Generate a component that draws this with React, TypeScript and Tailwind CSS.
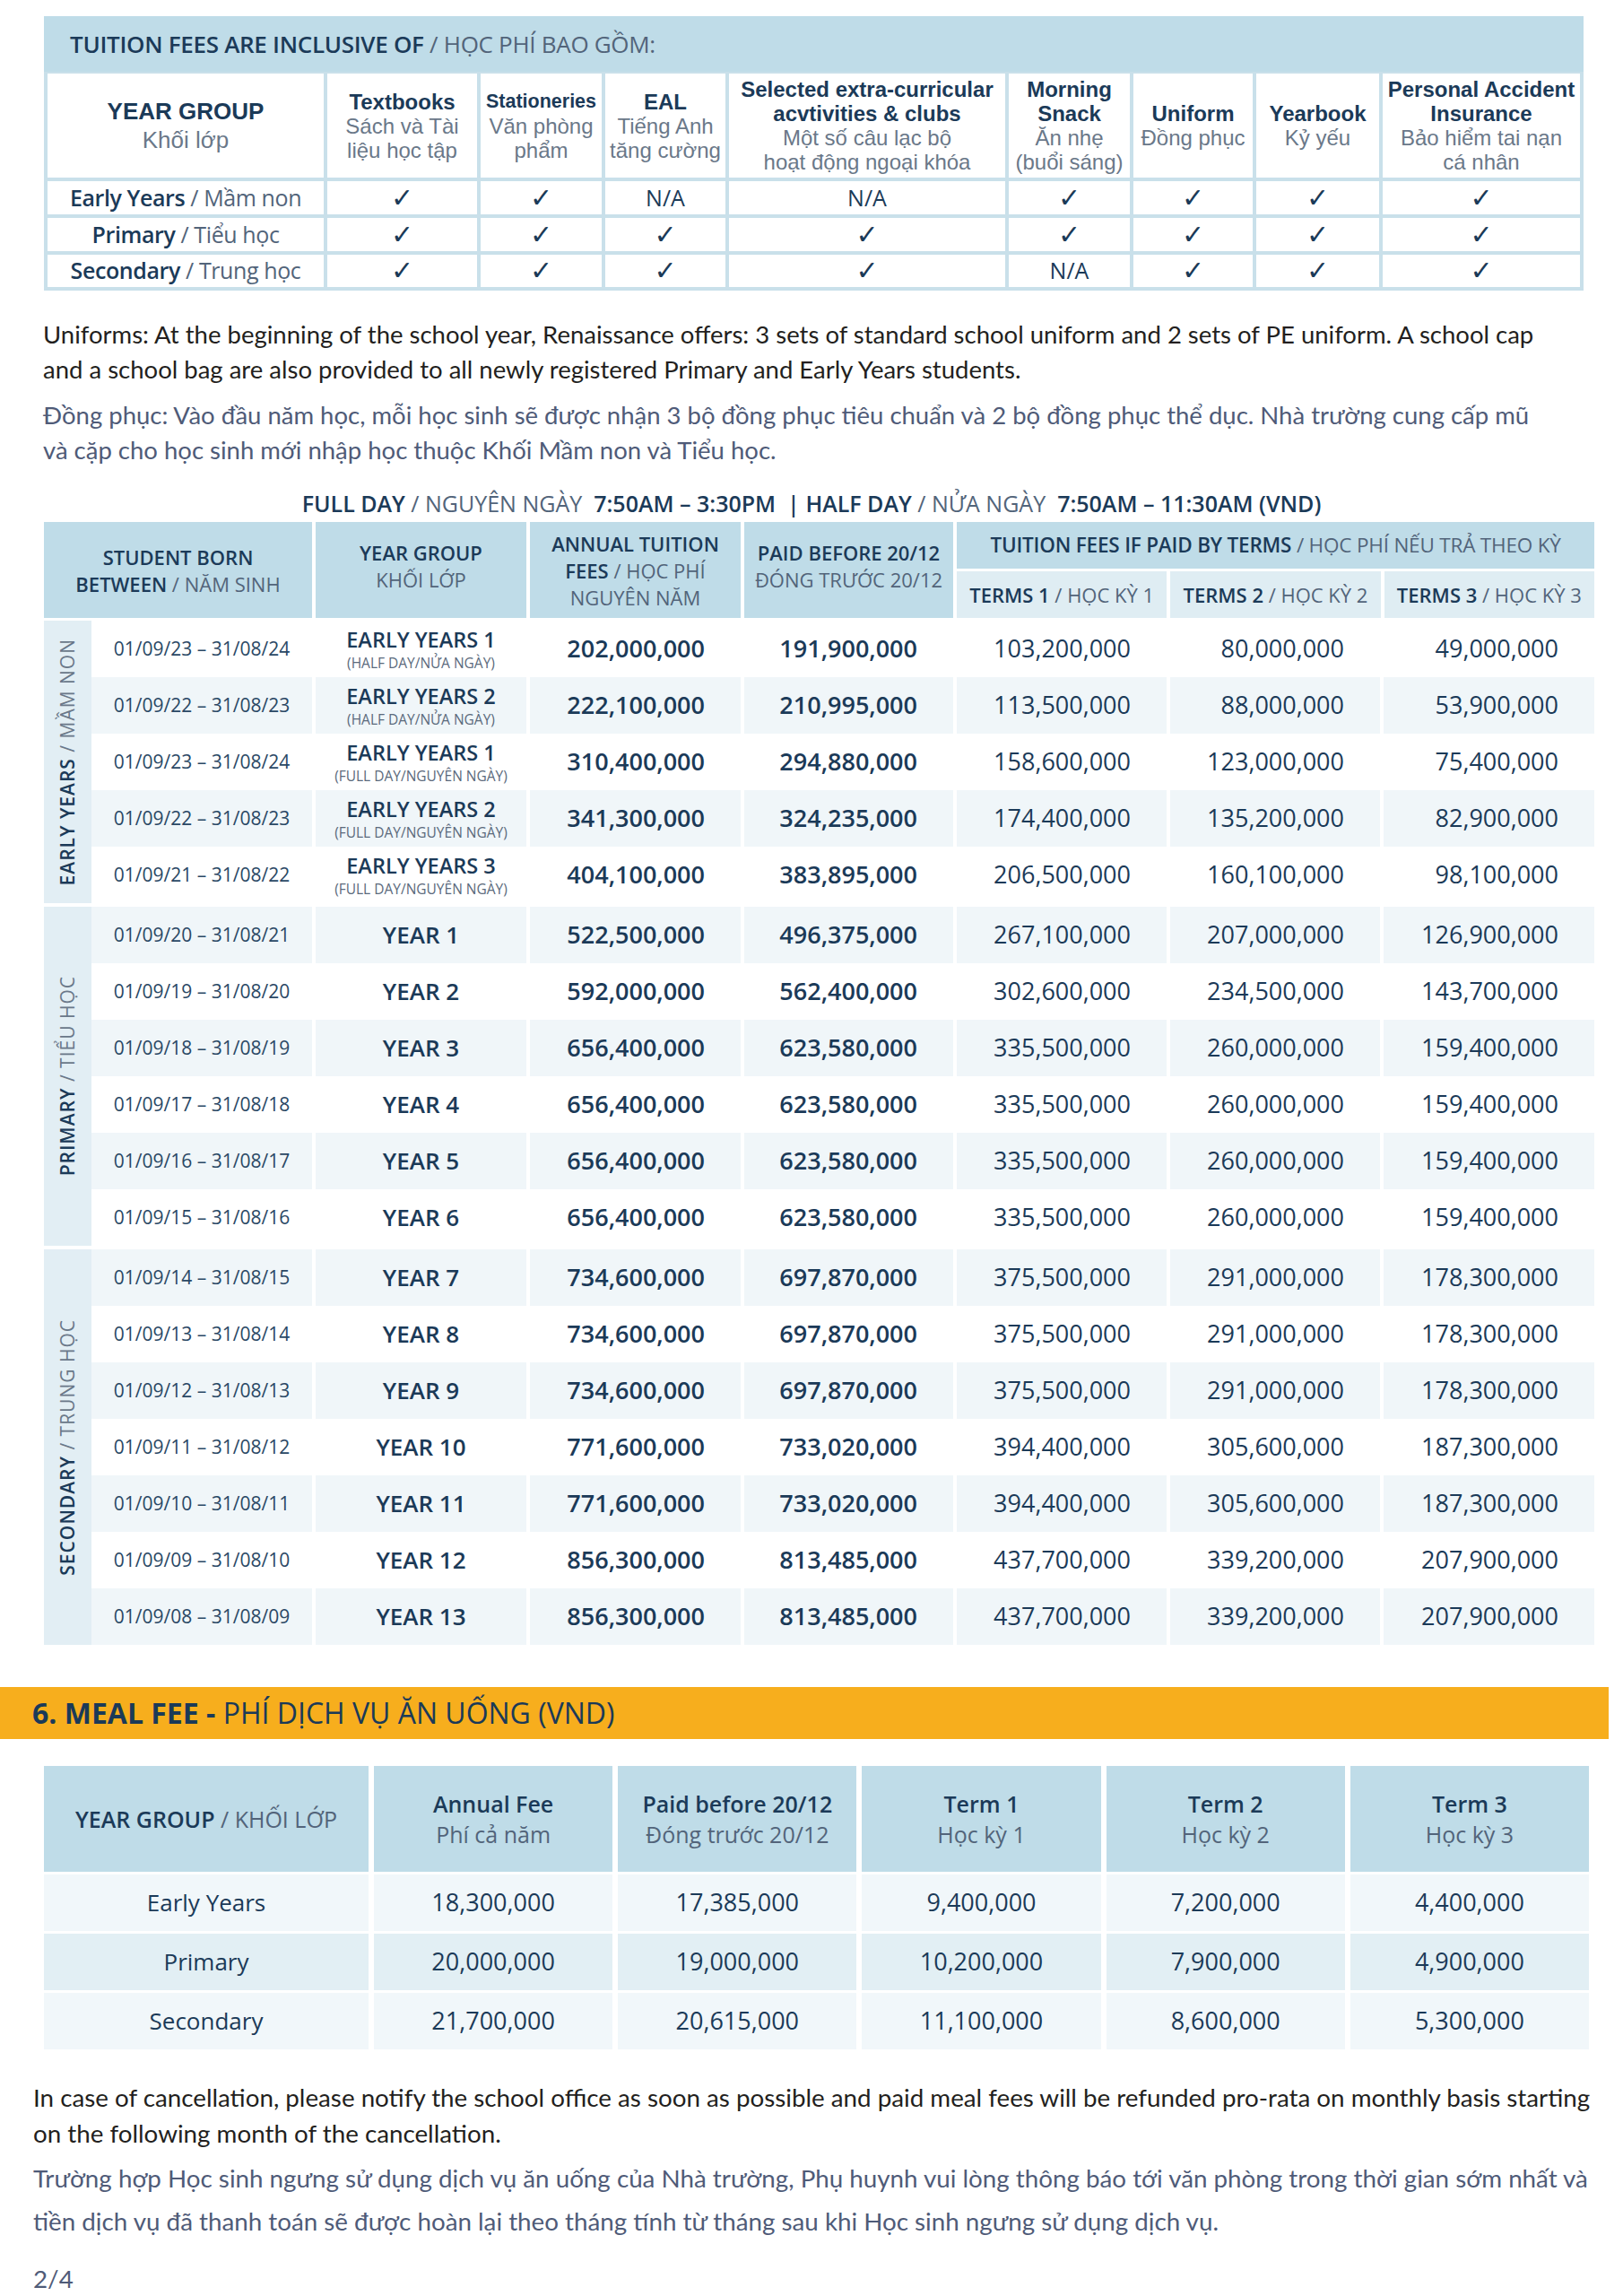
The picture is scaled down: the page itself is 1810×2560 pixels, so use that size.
import React from 'react';

const SANS = "font-['Open_Sans',sans-serif]";
const GROT = "font-['Liberation_Sans',sans-serif]";
const BODY = "font-['Lato',sans-serif]";
const CHECK = '✓';

type Inc = { en: string[]; vn: string[]; small?: boolean };

const incCols: Inc[] = [
  { en: ['Textbooks'], vn: ['Sách và Tài', 'liệu học tập'] },
  { en: ['Stationeries'], vn: ['Văn phòng', 'phẩm'], small: true },
  { en: ['EAL'], vn: ['Tiếng Anh', 'tăng cường'] },
  { en: ['Selected extra-curricular', 'acvtivities & clubs'], vn: ['Một số câu lạc bộ', 'hoạt động ngoại khóa'] },
  { en: ['Morning', 'Snack'], vn: ['Ăn nhẹ', '(buổi sáng)'] },
  { en: ['Uniform'], vn: ['Đồng phục'] },
  { en: ['Yearbook'], vn: ['Kỷ yếu'] },
  { en: ['Personal Accident', 'Insurance'], vn: ['Bảo hiểm tai nạn', 'cá nhân'] },
];

const incRows = [
  { en: 'Early Years', vn: 'Mầm non', v: [CHECK, CHECK, 'N/A', 'N/A', CHECK, CHECK, CHECK, CHECK] },
  { en: 'Primary', vn: 'Tiểu học', v: [CHECK, CHECK, CHECK, CHECK, CHECK, CHECK, CHECK, CHECK] },
  { en: 'Secondary', vn: 'Trung học', v: [CHECK, CHECK, CHECK, CHECK, 'N/A', CHECK, CHECK, CHECK] },
];

type FeeRow = { born: string; year: string; note?: string; fees: string[] };

const early: FeeRow[] = [
  { born: '01/09/23 – 31/08/24', year: 'EARLY YEARS 1', note: '(HALF DAY/NỬA NGÀY)', fees: ['202,000,000', '191,900,000', '103,200,000', '80,000,000', '49,000,000'] },
  { born: '01/09/22 – 31/08/23', year: 'EARLY YEARS 2', note: '(HALF DAY/NỬA NGÀY)', fees: ['222,100,000', '210,995,000', '113,500,000', '88,000,000', '53,900,000'] },
  { born: '01/09/23 – 31/08/24', year: 'EARLY YEARS 1', note: '(FULL DAY/NGUYÊN NGÀY)', fees: ['310,400,000', '294,880,000', '158,600,000', '123,000,000', '75,400,000'] },
  { born: '01/09/22 – 31/08/23', year: 'EARLY YEARS 2', note: '(FULL DAY/NGUYÊN NGÀY)', fees: ['341,300,000', '324,235,000', '174,400,000', '135,200,000', '82,900,000'] },
  { born: '01/09/21 – 31/08/22', year: 'EARLY YEARS 3', note: '(FULL DAY/NGUYÊN NGÀY)', fees: ['404,100,000', '383,895,000', '206,500,000', '160,100,000', '98,100,000'] },
];

const y3to6 = ['656,400,000', '623,580,000', '335,500,000', '260,000,000', '159,400,000'];
const primary: FeeRow[] = [
  { born: '01/09/20 – 31/08/21', year: 'YEAR 1', fees: ['522,500,000', '496,375,000', '267,100,000', '207,000,000', '126,900,000'] },
  { born: '01/09/19 – 31/08/20', year: 'YEAR 2', fees: ['592,000,000', '562,400,000', '302,600,000', '234,500,000', '143,700,000'] },
  { born: '01/09/18 – 31/08/19', year: 'YEAR 3', fees: y3to6 },
  { born: '01/09/17 – 31/08/18', year: 'YEAR 4', fees: y3to6 },
  { born: '01/09/16 – 31/08/17', year: 'YEAR 5', fees: y3to6 },
  { born: '01/09/15 – 31/08/16', year: 'YEAR 6', fees: y3to6 },
];

const y7to9 = ['734,600,000', '697,870,000', '375,500,000', '291,000,000', '178,300,000'];
const y10to11 = ['771,600,000', '733,020,000', '394,400,000', '305,600,000', '187,300,000'];
const y12to13 = ['856,300,000', '813,485,000', '437,700,000', '339,200,000', '207,900,000'];
const secondary: FeeRow[] = [
  { born: '01/09/14 – 31/08/15', year: 'YEAR 7', fees: y7to9 },
  { born: '01/09/13 – 31/08/14', year: 'YEAR 8', fees: y7to9 },
  { born: '01/09/12 – 31/08/13', year: 'YEAR 9', fees: y7to9 },
  { born: '01/09/11 – 31/08/12', year: 'YEAR 10', fees: y10to11 },
  { born: '01/09/10 – 31/08/11', year: 'YEAR 11', fees: y10to11 },
  { born: '01/09/09 – 31/08/10', year: 'YEAR 12', fees: y12to13 },
  { born: '01/09/08 – 31/08/09', year: 'YEAR 13', fees: y12to13 },
];

const groups = [
  { en: 'EARLY YEARS', vn: 'MẦM NON', rows: early, start: 0 },
  { en: 'PRIMARY', vn: 'TIỂU HỌC', rows: primary, start: 5 },
  { en: 'SECONDARY', vn: 'TRUNG HỌC', rows: secondary, start: 11 },
];

const meals = [
  { g: 'Early Years', v: ['18,300,000', '17,385,000', '9,400,000', '7,200,000', '4,400,000'], bg: 'bg-[#f1f7fa]' },
  { g: 'Primary', v: ['20,000,000', '19,000,000', '10,200,000', '7,900,000', '4,900,000'], bg: 'bg-[#e2eff4]' },
  { g: 'Secondary', v: ['21,700,000', '20,615,000', '11,100,000', '8,600,000', '5,300,000'], bg: 'bg-[#f1f7fa]' },
];

const mealHead = [
  ['Annual Fee', 'Phí cả năm'],
  ['Paid before 20/12', 'Đóng trước 20/12'],
  ['Term 1', 'Học kỳ 1'],
  ['Term 2', 'Học kỳ 2'],
  ['Term 3', 'Học kỳ 3'],
];

const InclusiveTable = () => (
  <div className="ml-[49px] mt-[18px] w-[1717px]">
    <div className="h-[62px] bg-[#bfdce8] pl-[29px] flex items-center text-[26px] tracking-[-0.3px]">
      <span className="font-semibold text-[#1b3a58]">TUITION FEES ARE INCLUSIVE OF</span>
      <span className="text-[#52647a]">&nbsp;/ HỌC PHÍ BAO GỒM:</span>
    </div>
    <div className="grid grid-cols-[308px_167px_135px_134px_308px_135px_133px_137px_220px] grid-rows-[116px_37px_37px_36px] gap-[4px] bg-[#c9e0ea] px-[4px] pt-[2px] pb-[4px]">
      <div className={`bg-white flex flex-col items-center justify-center leading-[32px] text-[26px] ${GROT}`}>
        <span className="font-bold text-[#1b3a58]">YEAR GROUP</span>
        <span className="text-[#6a7889]">Khối lớp</span>
      </div>
      {incCols.map((c, i) => (
        <div key={i} className={`bg-white flex flex-col items-center justify-center text-center leading-[27px] text-[24px] whitespace-nowrap ${GROT}`}>
          {c.en.map((t) => (
            <span key={t} className={`font-bold text-[#1b3a58] ${c.small ? 'text-[21.5px]' : ''}`}>{t}</span>
          ))}
          {c.vn.map((t) => (
            <span key={t} className="text-[#6a7889]">{t}</span>
          ))}
        </div>
      ))}
      {incRows.map((r) => (
        <React.Fragment key={r.en}>
          <div className="bg-white flex items-center justify-center text-[25px] tracking-[-0.4px]">
            <span className="font-semibold text-[#1b3a58]">{r.en}</span>
            <span className="text-[#52647a]">&nbsp;/ {r.vn}</span>
          </div>
          {r.v.map((v, i) => (
            <div key={i} className="bg-white flex items-center justify-center text-[#1b3a58]">
              {v === CHECK ? (
                <span className="font-['DejaVu_Sans',sans-serif] text-[30px] leading-none">{CHECK}</span>
              ) : (
                <span className="text-[25px] font-medium">{v}</span>
              )}
            </div>
          ))}
        </React.Fragment>
      ))}
    </div>
  </div>
);

const FeeHeader = () => (
  <div className="grid grid-cols-[299px_235px_235px_233px_711px] gap-x-[4px] h-[107px] text-[22px] leading-[30px] text-center">
    <div className="bg-[#bfdce8] flex flex-col items-center justify-center">
      <span className="font-semibold text-[#1b3a58]">STUDENT BORN</span>
      <span><span className="font-semibold text-[#1b3a58]">BETWEEN</span><span className="text-[#52647a]"> / NĂM SINH</span></span>
    </div>
    <div className="bg-[#bfdce8] flex flex-col items-center justify-center pb-[10px]">
      <span className="font-semibold text-[#1b3a58]">YEAR GROUP</span>
      <span className="text-[#52647a]">KHỐI LỚP</span>
    </div>
    <div className="bg-[#bfdce8] flex flex-col items-center justify-center">
      <span className="font-semibold text-[#1b3a58]">ANNUAL TUITION</span>
      <span><span className="font-semibold text-[#1b3a58]">FEES</span><span className="text-[#52647a]"> / HỌC PHÍ</span></span>
      <span className="text-[#52647a]">NGUYÊN NĂM</span>
    </div>
    <div className="bg-[#bfdce8] flex flex-col items-center justify-center pb-[10px]">
      <span className="font-semibold text-[#1b3a58]">PAID BEFORE 20/12</span>
      <span className="text-[#52647a]">ĐÓNG TRƯỚC 20/12</span>
    </div>
    <div className="flex flex-col gap-y-[3px]">
      <div className="h-[52px] bg-[#bfdce8] flex items-center justify-center text-[22.5px] tracking-[-0.2px]">
        <span className="font-semibold text-[#1b3a58]">TUITION FEES IF PAID BY TERMS</span>
        <span className="text-[#52647a]">&nbsp;/ HỌC PHÍ NẾU TRẢ THEO KỲ</span>
      </div>
      <div className="flex-1 grid grid-cols-3 gap-x-[4px] text-[22px]">
        {[1, 2, 3].map((n) => (
          <div key={n} className="bg-[#dfedf3] flex items-center justify-center">
            <span className="font-semibold text-[#1b3a58]">TERMS {n}</span>
            <span className="text-[#52647a]">&nbsp;/ HỌC KỲ {n}</span>
          </div>
        ))}
      </div>
    </div>
  </div>
);

const FeeRowView = ({ r, shade }: { r: FeeRow; shade: boolean }) => {
  const bg = shade ? 'bg-[#f0f6f9]' : 'bg-white';
  return (
    <div className="grid grid-cols-[246px_235px_235px_233px_234px_234px_235px] gap-x-[4px] h-[63px] text-[#1b3a58]">
      <div className={`${bg} flex items-center justify-center text-[21px] text-[#2a4865]`}>{r.born}</div>
      <div className={`${bg} flex flex-col items-center justify-center`}>
        <span className={`font-semibold ${r.note ? 'text-[23.5px] leading-[31px]' : 'text-[26px]'}`}>{r.year}</span>
        {r.note && <span className="text-[15.5px] leading-[21px] text-[#5b6a7c]">{r.note}</span>}
      </div>
      {r.fees.map((f, i) => (
        <div key={i} className={`${bg} flex items-center justify-end pr-[40px] text-[27px] ${i < 2 ? 'font-semibold' : ''}`}>
          {f}
        </div>
      ))}
    </div>
  );
};

const FeeTable = () => (
  <div className={`ml-[49px] mt-[6px] w-[1729px] ${SANS}`}>
    <FeeHeader />
    <div className="flex flex-col gap-y-[4px] mt-[3px]">
      {groups.map((g) => (
        <div key={g.en} className="flex">
          <div className="w-[53px] bg-[#e2eef4] flex items-center justify-center">
            <span className="[writing-mode:vertical-rl] rotate-180 whitespace-nowrap text-[21px] tracking-[1px]">
              <span className="font-semibold text-[#1b3a58]">{g.en}</span>
              <span className="text-[#6a7889]"> / {g.vn}</span>
            </span>
          </div>
          <div className="flex-1 flex flex-col">
            {g.rows.map((r, i) => (
              <FeeRowView key={i} r={r} shade={(g.start + i) % 2 === 1} />
            ))}
          </div>
        </div>
      ))}
    </div>
  </div>
);

const MealTable = () => (
  <div className={`ml-[49px] mt-[30px] w-[1723px] ${SANS}`}>
    <div className="grid grid-cols-[362px_repeat(5,1fr)] gap-x-[6px] h-[118px] bg-white text-[25px] leading-[34px] text-center">
      <div className="bg-[#bfdce8] flex items-center justify-center">
        <span className="font-semibold text-[#1b3a58]">YEAR GROUP</span>
        <span className="text-[#52647a]">&nbsp;/ KHỐI LỚP</span>
      </div>
      {mealHead.map(([en, vn]) => (
        <div key={en} className="bg-[#bfdce8] flex flex-col items-center justify-center">
          <span className="font-semibold text-[#1b3a58]">{en}</span>
          <span className="text-[#52647a]">{vn}</span>
        </div>
      ))}
    </div>
    <div className="flex flex-col gap-y-[3px] mt-[3px]">
      {meals.map((m) => (
        <div key={m.g} className="grid grid-cols-[362px_repeat(5,1fr)] gap-x-[6px] h-[63px] text-[27px] text-[#1b3a58]">
          <div className={`${m.bg} flex items-center justify-center font-medium text-[26px]`}>{m.g}</div>
          {m.v.map((v, i) => (
            <div key={i} className={`${m.bg} flex items-center justify-center ${i < 2 ? 'font-medium' : ''}`}>{v}</div>
          ))}
        </div>
      ))}
    </div>
  </div>
);

export default function App() {
  return (
    <div className={`w-[1810px] h-[2560px] bg-white flex flex-col ${SANS}`}>
      <InclusiveTable />

      <div className={`ml-[48px] mt-[29px] ${BODY} text-[27.5px] leading-[39px] whitespace-nowrap`}>
        <p className="text-[#231f20]">
          Uniforms: At the beginning of the school year, Renaissance offers: 3 sets of standard school uniform and 2 sets of PE uniform. A school cap
          <br />
          and a school bag are also provided to all newly registered Primary and Early Years students.
        </p>
        <p className="mt-[12px] text-[#4f5b78]">
          Đồng phục: Vào đầu năm học, mỗi học sinh sẽ được nhận 3 bộ đồng phục tiêu chuẩn và 2 bộ đồng phục thể dục. Nhà trường cung cấp mũ
          <br />
          và cặp cho học sinh mới nhập học thuộc Khối Mầm non và Tiểu học.
        </p>
      </div>

      <div className="mt-[25px] text-center text-[25px] leading-[30px] whitespace-nowrap">
        <span className="font-semibold text-[#1b3a58]">FULL DAY</span>
        <span className="text-[#52647a]"> / NGUYÊN NGÀY&nbsp; </span>
        <span className="font-semibold text-[#1b3a58]">7:50AM – 3:30PM &nbsp;| HALF DAY</span>
        <span className="text-[#52647a]"> / NỬA NGÀY&nbsp; </span>
        <span className="font-semibold text-[#1b3a58]">7:50AM – 11:30AM (VND)</span>
      </div>

      <FeeTable />

      <div className="mt-[47px] w-[1794px] h-[58px] bg-[#f7ae1d] flex items-center pl-[36px] text-[32px] text-[#1b3a58]">
        <span className="font-bold">6. MEAL FEE -&nbsp;</span>
        <span>PHÍ DỊCH VỤ ĂN UỐNG (VND)</span>
      </div>

      <MealTable />

      <div className={`ml-[37px] mt-[34px] ${BODY} text-[27.75px] whitespace-nowrap`}>
        <p className="text-[#231f20] leading-[40px]">
          In case of cancellation, please notify the school office as soon as possible and paid meal fees will be refunded pro-rata on monthly basis starting
          <br />
          on the following month of the cancellation.
        </p>
        <p className="mt-[6px] text-[#4f5b78] leading-[48px]">
          Trường hợp Học sinh ngưng sử dụng dịch vụ ăn uống của Nhà trường, Phụ huynh vui lòng thông báo tới văn phòng trong thời gian sớm nhất và
          <br />
          tiền dịch vụ đã thanh toán sẽ được hoàn lại theo tháng tính từ tháng sau khi Học sinh ngưng sử dụng dịch vụ.
        </p>
        <p className="mt-[25px] text-[#4f5b78] leading-[30px]">2/4</p>
      </div>
    </div>
  );
}
